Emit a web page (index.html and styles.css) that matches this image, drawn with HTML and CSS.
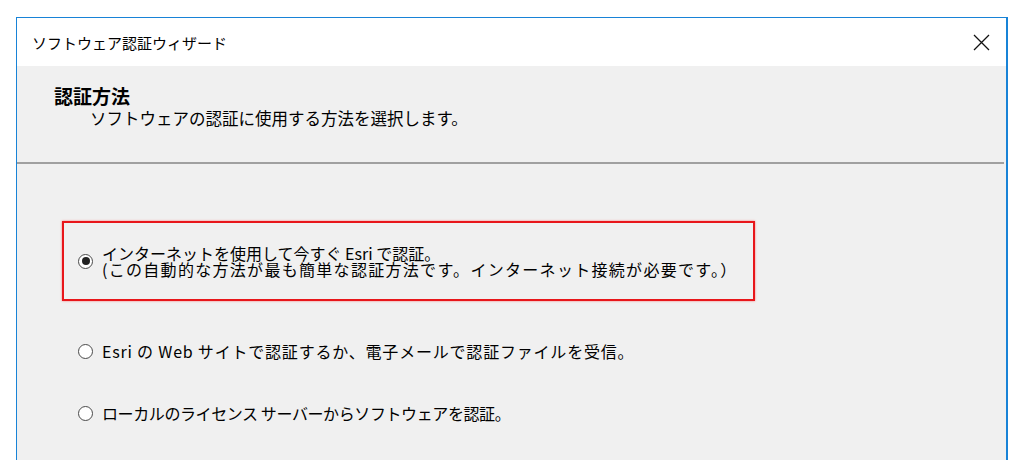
FILE: index.html
```html
<!DOCTYPE html>
<html lang="ja">
<head>
    <meta charset="UTF-8">
    <title>ソフトウェア認証ウィザード</title>
    <link rel="stylesheet" href="styles.css">
</head>
<body>
    <div class="window">
        <div class="titlebar">
            <span class="title">ソフトウェア認証ウィザード</span>
            <svg class="close" width="17" height="17" viewBox="0 0 17 17">
                <path d="M1 1 L16 16 M16 1 L1 16" stroke="#111" stroke-width="1.3" fill="none"/>
            </svg>
        </div>

        <div class="header">
            <h1>認証方法</h1>
            <p>ソフトウェアの認証に使用する方法を選択します。</p>
        </div>

        <div class="content">
            <div class="highlight">
                <label class="option">
                    <span class="radio checked"></span>
                    <span class="label-text">
                        <span class="line">インターネットを使用して今すぐ Esri で認証。</span>
                        <span class="line wide">(この自動的な方法が最も簡単な認証方法です。インターネット接続が必要です。）</span>
                    </span>
                </label>
            </div>
            <label class="option plain">
                <span class="radio"></span>
                <span class="label-text web">Esri の Web サイトで認証するか、電子メールで認証ファイルを受信。</span>
            </label>
            <label class="option plain">
                <span class="radio"></span>
                <span class="label-text local">ローカルのライセンス サーバーからソフトウェアを認証。</span>
            </label>
        </div>
    </div>
</body>
</html>
```

FILE: styles.css
```css
body { margin: 0; background: white; font-family: "Noto Sans CJK JP", "Noto Sans", sans-serif; color: #000; }
.window { margin: 17px 0 16px 16px; width: 989px; border: 1px solid #1883d7; border-right-width: 2px; border-bottom: none; background: #f0f0f0; }
.titlebar { height: 48px; background: white; display: flex; align-items: center; justify-content: space-between; padding: 0 16px 0 15px; }
.title { font-size: 15px; }
.close { display: block; }
.header { height: 98px; padding: 19px 0 0 37px; box-sizing: border-box; border-bottom: 2px solid #a0a0a0; margin-right: 2px; }
.header h1 { margin: 0; font-size: 19px; font-weight: bold; line-height: 22px; }
.header p { margin: 0 0 0 36px; font-size: 16.5px; line-height: 22px; }
.content { height: 296px; padding: 57px 0 0 45px; box-sizing: border-box; }
.highlight { width: 693px; height: 80px; border: 2px solid #e8161a; box-shadow: 0 0 2px rgba(255, 0, 0, 0.5); display: flex; align-items: center; padding-left: 14px; box-sizing: border-box; }
.option { display: flex; align-items: center; font-size: 16px; line-height: 16px; }
.label-text .line { display: block; }
.label-text .wide { letter-spacing: 1.3px; }
.label-text.web { letter-spacing: 0.8px; }
.label-text.local { letter-spacing: -0.4px; }
.option.plain { margin: 42px 0 0 16px; }
.option.plain + .option.plain { margin-top: 46px; }
.radio { width: 13px; height: 13px; border: 1.5px solid #4a4a4a; border-radius: 50%; background: white; margin-right: 9px; flex-shrink: 0; position: relative; }
.radio.checked::after { content: ""; position: absolute; left: 2.5px; top: 2.5px; width: 8px; height: 8px; border-radius: 50%; background: #222; }
```
